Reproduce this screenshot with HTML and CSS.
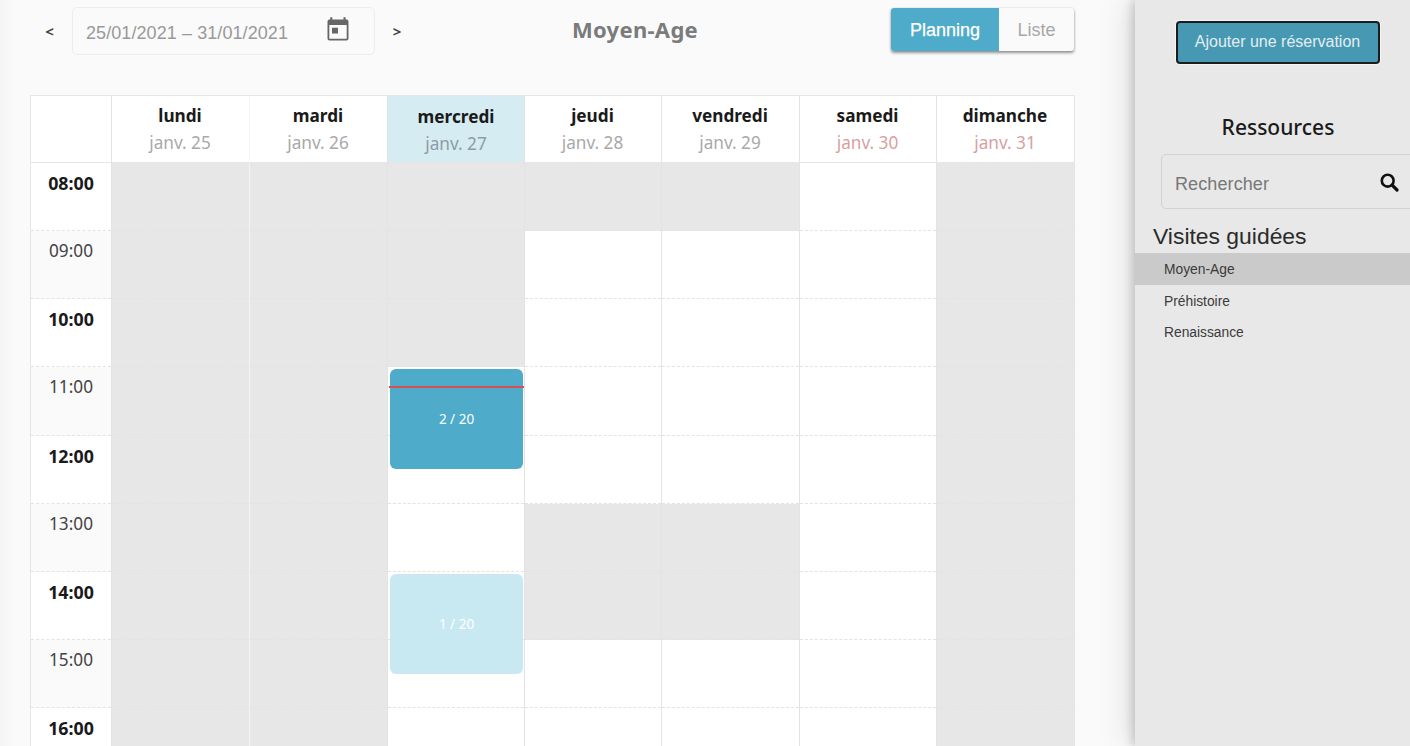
FILE: index.html
```html
<!DOCTYPE html>
<html lang="fr">
<head>
<meta charset="utf-8">
<title>Planning</title>
<link rel="stylesheet" href="styles.css">
</head>
<body>
<main class="main">
  <header class="toolbar">
    <button class="nav">&lt;</button>
    <div class="range"><span class="range-text">25/01/2021 – 31/01/2021</span>
      <svg class="cal-icon" viewBox="0 0 22 24"><path fill="#666" fill-rule="evenodd" d="M3.200 .3h2.100v2.200h11.200V.3h2.100v2.200h1A2 2 0 0 1 21.500 4.500v17a2 2 0 0 1-2 2H2.500a2 2 0 0 1-2-2v-17a2 2 0 0 1 2-2h.7zM2.300 8v13.700h17.400V8zM5 10.800h6v5.700H5z"/></svg>
    </div>
    <button class="nav next">&gt;</button>
    <h1 class="title">Moyen-Age</h1>
    <div class="views"><button class="view active">Planning</button><button class="view">Liste</button></div>
  </header>
  <section class="calendar">
    <div class="col hours"><div class="head"></div>
      <div class="slot">08:00</div><div class="slot">09:00</div><div class="slot">10:00</div><div class="slot">11:00</div><div class="slot">12:00</div><div class="slot">13:00</div><div class="slot">14:00</div><div class="slot">15:00</div><div class="slot">16:00</div>
    </div>
    <div class="col light"><div class="head"><b>lundi</b><span>janv. 25</span></div>
      <div class="slot off"></div><div class="slot off"></div><div class="slot off"></div><div class="slot off"></div><div class="slot off"></div><div class="slot off"></div><div class="slot off"></div><div class="slot off"></div><div class="slot off"></div>
    </div>
    <div class="col"><div class="head"><b>mardi</b><span>janv. 26</span></div>
      <div class="slot off"></div><div class="slot off"></div><div class="slot off"></div><div class="slot off"></div><div class="slot off"></div><div class="slot off"></div><div class="slot off"></div><div class="slot off"></div><div class="slot off"></div>
    </div>
    <div class="col today"><div class="head"><b>mercredi</b><span>janv. 27</span></div>
      <div class="slot off"></div><div class="slot off"></div><div class="slot off"></div><div class="slot"></div><div class="slot"></div><div class="slot"></div><div class="slot"></div><div class="slot"></div><div class="slot"></div>
      <div class="event full">2 / 20</div>
      <div class="now"></div>
      <div class="event pale">1 / 20</div>
    </div>
    <div class="col"><div class="head"><b>jeudi</b><span>janv. 28</span></div>
      <div class="slot off"></div><div class="slot"></div><div class="slot"></div><div class="slot"></div><div class="slot"></div><div class="slot off"></div><div class="slot off"></div><div class="slot"></div><div class="slot"></div>
    </div>
    <div class="col"><div class="head"><b>vendredi</b><span>janv. 29</span></div>
      <div class="slot off"></div><div class="slot"></div><div class="slot"></div><div class="slot"></div><div class="slot"></div><div class="slot off"></div><div class="slot off"></div><div class="slot"></div><div class="slot"></div>
    </div>
    <div class="col weekend"><div class="head"><b>samedi</b><span>janv. 30</span></div>
      <div class="slot"></div><div class="slot"></div><div class="slot"></div><div class="slot"></div><div class="slot"></div><div class="slot"></div><div class="slot"></div><div class="slot"></div><div class="slot"></div>
    </div>
    <div class="col weekend"><div class="head"><b>dimanche</b><span>janv. 31</span></div>
      <div class="slot off"></div><div class="slot off"></div><div class="slot off"></div><div class="slot off"></div><div class="slot off"></div><div class="slot off"></div><div class="slot off"></div><div class="slot off"></div><div class="slot off"></div>
    </div>
  </section>
</main>
<aside class="side">
  <button class="add">Ajouter une réservation</button>
  <h2 class="side-title">Ressources</h2>
  <div class="search"><span class="search-text">Rechercher</span>
    <svg class="search-icon" viewBox="0 0 19 19"><circle cx="7.700" cy="7.700" r="5.900" fill="none" stroke="#111" stroke-width="2.600"/><path d="M12.200 12.200L17 17" stroke="#111" stroke-width="3.200" stroke-linecap="round"/></svg>
  </div>
  <h3 class="group">Visites guidées</h3>
  <ul class="list"><li class="item selected">Moyen-Age</li><li class="item">Préhistoire</li><li class="item">Renaissance</li></ul>
</aside>
</body>
</html>
```
FILE: styles.css
```css
* { box-sizing: border-box; margin: 0; padding: 0; }
body { width: 1410px; height: 746px; overflow: hidden; display: flex; background: #fafafa; font-family: "Liberation Sans", Arial, sans-serif; }
button { border: 0; background: none; font-family: inherit; }
.main { width: 1135px; height: 746px; overflow: hidden; background: linear-gradient(to right, #f4f4f4, #fafafa 16px); }

.toolbar { height: 95px; padding: 7px 0 0 30px; display: flex; align-items: flex-start; }
.nav { width: 42px; height: 48px; padding-right: 3px; font: 700 15px "Noto Sans", sans-serif; color: #444; }
.next { width: 46px; padding: 0 2px 0 0; }
.range { width: 303px; height: 48px; border: 1px solid #ededed; border-radius: 5px; padding: 0 25px 0 13px; display: flex; align-items: center; justify-content: space-between; }
.range-text { font-size: 18px; letter-spacing: 0.08px; color: #999; padding-top: 4px; }
.cal-icon { width: 22px; height: 24px; margin-bottom: 4px; }
.title { width: 270px; margin-left: 79px; height: 46px; text-align: center; font: 700 22px/45px "Noto Sans", sans-serif; letter-spacing: 0.3px; color: #7b7b7b; }
.views { margin: 1px 0 0 121px; width: 183px; height: 43px; display: flex; border-radius: 3px; overflow: hidden; background: #fafafa; box-shadow: 0 2px 3px rgba(0,0,0,.4), 0 0 2px rgba(0,0,0,.15); }
.view { flex: 1; padding-top: 1px; font-size: 18px; color: #a8a8a8; }
.view.active { flex: none; width: 108px; background: #4eabc9; color: #fff; -webkit-text-stroke: .25px #fff; }

.calendar { margin-left: 30px; width: 1045px; height: 720px; display: grid; grid-template-columns: 82px 138px 138px 137px 137px 138px 137px 138px; border-top: 1px solid #e6e6e6; font-family: "Noto Sans", sans-serif; }
.col { background: #fff; border-right: 1px solid #e3e3e3; position: relative; }
.hours { border-left: 1px solid #e6e6e6; }
.light { border-right-color: #f4f4f4; }
.head { height: 67px; border-bottom: 1px solid #e6e6e6; padding: 6px 1px 0 0; display: flex; flex-direction: column; align-items: center; line-height: 27px; font-size: 17.200px; color: #a9a9a9; }
.head b { font-weight: 700; color: #1a1a1a; }
.weekend .head span { color: #d9a0a0; }
.today .head { background: #d5ecf2; padding: 7px 0 0; }
.today .head span { color: #8d9da3; }
.slot { height: 68.150px; border-bottom: 1px dashed #e3e3e3; }
.slot.off { background: #e7e7e7; }
.hours .slot { padding-top: 8px; line-height: 24px; text-align: center; font-size: 17.800px; font-weight: 700; color: #1a1a1a; }
.hours .slot:nth-child(odd) { font-weight: 400; font-size: 17.200px; color: #444; background: #fafafa; }
.event { position: absolute; left: 2px; width: 133px; height: 100px; border-radius: 6px; display: flex; align-items: center; justify-content: center; font-size: 13.500px; color: #fff; }
.full { top: 273px; background: #4eabc9; }
.pale { top: 478px; background: #c8e9f1; }
.now { position: absolute; left: 1px; top: 290px; width: 135px; height: 2px; background: #d6504f; }

.side { width: 275px; height: 746px; background: #e8e8e8; box-shadow: -3px 0 9px rgba(0,0,0,.16), -5px 0 30px rgba(0,0,0,.13); position: relative; display: flex; flex-direction: column; padding-top: 21px; }
.add { margin-left: 41px; width: 204px; height: 43px; flex: none; border: 2px solid #1c1c1c; border-radius: 4px; background: #4698b3; box-shadow: 0 0 0 1px #f4f4f4; color: #e4edf0; font-size: 16px; padding: 0 1px 1px 0; }
.side-title { margin-top: 48px; padding-left: 11px; text-align: center; font: 500 21px/31px "Noto Sans", sans-serif; color: #1a1a1a; }
.search { margin: 11px 0 0 26px; width: 256px; height: 55px; border: 1px solid #d2d2d2; border-radius: 5px; padding: 5px 17px 0 13px; display: flex; align-items: center; justify-content: space-between; }
.search-text { font-size: 18px; letter-spacing: 0.1px; color: #777; }
.search-icon { width: 19px; height: 19px; margin: 0 0 3px; }
.group { margin: 11px 0 0 18px; font-size: 22.900px; line-height: 33px; font-weight: 400; color: #2b2b2b; }
.list { list-style: none; }
.item { height: 31.500px; line-height: 33px; padding-left: 29px; font-size: 13.800px; color: #3b3b3b; }
.selected { background: #cacaca; }
```
